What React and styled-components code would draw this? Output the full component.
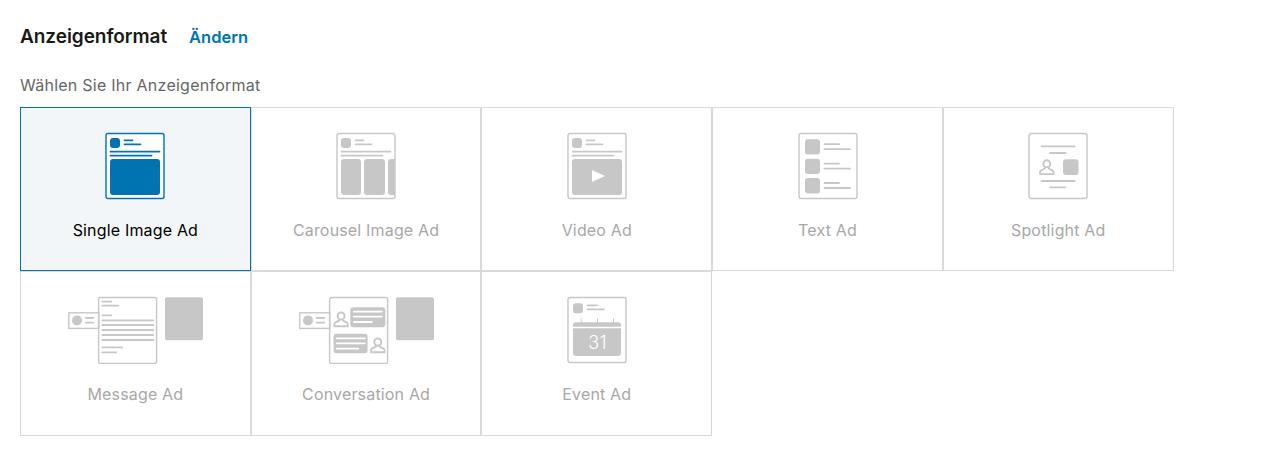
import React from "react";
import styled, { createGlobalStyle } from "styled-components";

const Global = createGlobalStyle`
  body {
    margin: 0;
    background: #fff;
    font-family: Inter, "Liberation Sans", sans-serif;
  }
`;

const Page = styled.div`
  padding: 24px 20px;
`;

const Header = styled.div`
  display: flex;
  align-items: center;
  gap: 22px;
  height: 26px;
`;

const Title = styled.h2`
  margin: 0;
  font-size: 19px;
  line-height: 26px;
  font-weight: 600;
  letter-spacing: -0.05px;
  color: #191919;
`;

const ChangeLink = styled.a`
  font-size: 16.5px;
  font-weight: 600;
  color: #0073b1;
  cursor: pointer;
`;

const Hint = styled.p`
  margin: 23px 0 10px;
  font-size: 16px;
  line-height: 24px;
  letter-spacing: 0.25px;
  color: #666;
`;

const Grid = styled.div`
  display: grid;
  width: 1153.6px;
  grid-template-columns: repeat(5, 1fr);
  grid-auto-rows: 164.4px;
`;

const Cell = styled.button`
  display: flex;
  flex-direction: column;
  align-items: center;
  box-sizing: border-box;
  margin: 0;
  padding: 24px 0 0;
  font: inherit;
  font-size: 16px;
  letter-spacing: 0.17px;
  background: ${(p) => (p.$selected ? "#f3f6f8" : "#fff")};
  border: 1px solid ${(p) => (p.$selected ? "#0073b1" : "#d9d9d9")};
  color: ${(p) => (p.$selected ? "#000" : "#a8a8a8")};
`;

const Art = styled.svg`
  display: block;
  flex: none;
  height: 68px;
  color: ${(p) => (p.$selected ? "#0073b1" : "#c7c7c7")};
`;

const Label = styled.span`
  margin-top: 18px;
  line-height: 24px;
`;

const Day = styled.text`
  font-family: Inter, "Liberation Sans", sans-serif;
  font-size: 18px;
  font-weight: 300;
  fill: #fff;
  text-anchor: middle;
`;

const Sheet = ({ x = 1, y = 1.5, w = 58, h = 65 }) => (
  <rect x={x} y={y} width={w} height={h} rx="2" fill="none" stroke="currentColor" strokeWidth="1.4" />
);

const Bar = ({ x1, x2, y, c = "currentColor" }) => (
  <line x1={x1} x2={x2} y1={y} y2={y} stroke={c} strokeWidth="1.8" strokeLinecap="round" />
);

const Block = ({ x, y, w, h, r = 3 }) => <rect x={x} y={y} width={w} height={h} rx={r} fill="currentColor" />;

const Person = ({ x, y }) => (
  <g transform={`translate(${x} ${y})`} fill="none" stroke="currentColor" strokeWidth="1.9">
    <circle cx="7.5" cy="4.3" r="3.5" />
    <path d="M5.5 8 V9 L1.6 11 Q0.8 11.5 0.8 12.6 V14.6 H14.2 V12.6 Q14.2 11.5 13.4 11 L9.5 9 V8" />
  </g>
);

const Head = () => (
  <>
    <Block x={5} y={6} w={10} h={10} />
    <Bar x1={19.5} x2={27.5} y={8.3} />
    <Bar x1={19.5} x2={35.5} y={12.3} />
  </>
);

const PostHead = () => (
  <>
    <Sheet />
    <Head />
    <Bar x1={5.5} x2={54.5} y={19.7} />
    <Bar x1={5.5} x2={46.5} y={23.7} />
  </>
);

const Sender = () => (
  <>
    <rect x="1" y="16.8" width="30" height="15.6" fill="none" stroke="currentColor" strokeWidth="1.4" />
    <circle cx="9.2" cy="24.4" r="5" fill="currentColor" />
    <Bar x1={18} x2={25.5} y={22} />
    <Bar x1={18} x2={25.5} y={26.7} />
    <Block x={97.2} y={1.3} w={38} h={43} r={2} />
  </>
);

const SingleIcon = () => (
  <>
    <rect x="1" y="1.5" width="58" height="65" rx="2" fill="#fff" stroke="currentColor" strokeWidth="1.4" />
    <Head />
    <Bar x1={5.5} x2={54.5} y={19.7} />
    <Bar x1={5.5} x2={46.5} y={23.7} />
    <Block x={5} y={27} w={50} h={36} />
  </>
);

const CarouselIcon = () => (
  <>
    <PostHead />
    <Block x={5} y={27} w={20} h={36} />
    <Block x={28} y={27} w={21} h={36} />
    <path d="M59 27 H55 Q52 27 52 30 V60 Q52 63 55 63 H59 Z" fill="currentColor" />
  </>
);

const VideoIcon = () => (
  <>
    <PostHead />
    <Block x={5} y={27} w={50} h={36} />
    <path d="M25 38 L38 44 L25 50 Z" fill="#fff" />
  </>
);

const TextIcon = () => (
  <>
    <Sheet />
    {[7.2, 26.7, 46].map((y) => (
      <React.Fragment key={y}>
        <Block x={7} y={y} w={15} h={15.4} />
        <Bar x1={26.5} x2={41} y={y + 5} />
        <Bar x1={26.5} x2={52} y={y + 10} />
      </React.Fragment>
    ))}
  </>
);

const SpotlightIcon = () => (
  <>
    <Sheet />
    <Bar x1={13.5} x2={46.5} y={14.3} />
    <Bar x1={22} x2={37.5} y={21} />
    <Person x={11.3} y={27.5} />
    <Block x={35} y={27.3} w={15.5} h={15.7} />
    <Bar x1={13.5} x2={46.5} y={49} />
    <Bar x1={22} x2={37.5} y={55.3} />
  </>
);

const MessageIcon = () => (
  <g transform="translate(0.8 0)">
    <Sender />
    <Sheet x={30.8} y={1.5} h={66} />
    <Bar x1={34.5} x2={43.5} y={5.7} />
    <Bar x1={34.5} x2={50.5} y={9.7} />
    <Bar x1={34.5} x2={43.5} y={19.3} />
    {[24.3, 29, 34, 39, 44].map((y) => (
      <Bar key={y} x1={34.5} x2={85.5} y={y} />
    ))}
    <Bar x1={34.5} x2={54.5} y={51.3} />
    <Bar x1={34.5} x2={48.5} y={56.3} />
  </g>
);

const ConversationIcon = () => (
  <g transform="translate(0.8 0)">
    <Sender />
    <Sheet x={30.8} y={1.5} h={66} />
    <Person x={34.8} y={15.7} />
    <Block x={51.5} y={11.3} w={35} h={20} />
    <Bar x1={55} x2={83} y={15.7} c="#fff" />
    <Bar x1={55} x2={83} y={20.7} c="#fff" />
    <Bar x1={55} x2={73} y={26} c="#fff" />
    <Block x={34.8} y={37.7} w={34} h={19.6} />
    <Bar x1={38} x2={66} y={42.3} c="#fff" />
    <Bar x1={38} x2={66} y={47.3} c="#fff" />
    <Bar x1={38} x2={59.5} y={52.7} c="#fff" />
    <Person x={71.5} y={41.7} />
  </g>
);

const EventIcon = () => (
  <>
    <Sheet />
    <Block x={6} y={7.3} w={10} h={10} />
    <Bar x1={20.5} x2={30} y={9.3} />
    <Bar x1={20.5} x2={37} y={13.3} />
    <path d="M14.2 22.3 V27 M30.5 22.3 V27 M46.5 22.3 V27" stroke="currentColor" strokeWidth="1" fill="none" />
    <path d="M6 30.7 V29 Q6 26.3 9 26.3 H51 Q54 26.3 54 29 V30.7 Z" fill="currentColor" />
    <path d="M6 32.3 H54 V57 Q54 60 51 60 H9 Q6 60 6 57 Z" fill="currentColor" />
    <Day x="30.5" y="53">31</Day>
  </>
);

const formats = [
  { label: "Single Image Ad", Icon: SingleIcon, width: 60, selected: true },
  { label: "Carousel Image Ad", Icon: CarouselIcon, width: 60 },
  { label: "Video Ad", Icon: VideoIcon, width: 60 },
  { label: "Text Ad", Icon: TextIcon, width: 60 },
  { label: "Spotlight Ad", Icon: SpotlightIcon, width: 60 },
  { label: "Message Ad", Icon: MessageIcon, width: 136 },
  { label: "Conversation Ad", Icon: ConversationIcon, width: 136 },
  { label: "Event Ad", Icon: EventIcon, width: 60 },
];

export default function App() {
  return (
    <Page>
      <Global />
      <Header>
        <Title>Anzeigenformat</Title>
        <ChangeLink>Ändern</ChangeLink>
      </Header>
      <Hint>Wählen Sie Ihr Anzeigenformat</Hint>
      <Grid>
        {formats.map(({ label, Icon, width, selected }) => (
          <Cell key={label} $selected={selected}>
            <Art $selected={selected} width={width} viewBox={`0 0 ${width} 68`}>
              <Icon />
            </Art>
            <Label>{label}</Label>
          </Cell>
        ))}
      </Grid>
    </Page>
  );
}
